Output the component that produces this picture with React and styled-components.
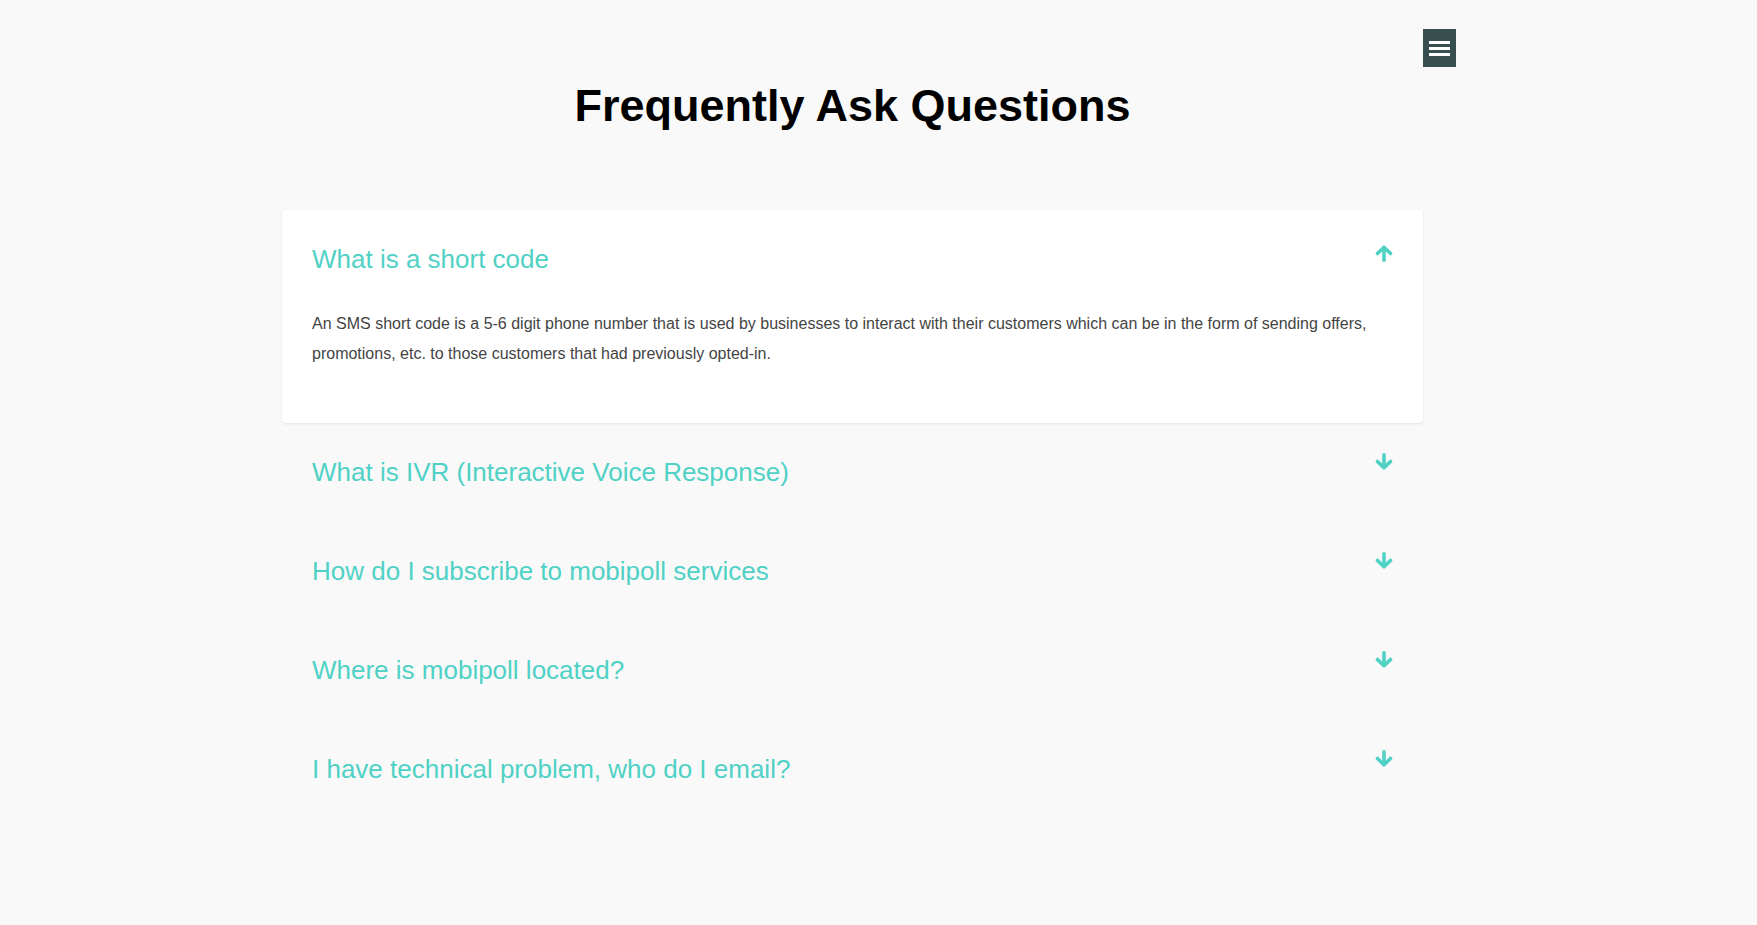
import React, { useState } from "react";
import styled, { createGlobalStyle } from "styled-components";

const GlobalStyle = createGlobalStyle`
  body {
    margin: 0;
    background: #f9f9f9;
    font-family: "Liberation Sans", Arial, sans-serif;
  }
`;

const Page = styled.div`
  width: 1141px;
  margin-left: 282px;
  padding-top: 80px;
  padding-bottom: 80px;
`;

const Title = styled.h1`
  margin: 0 0 78px;
  text-align: center;
  font-size: 45px;
  line-height: 52px;
  font-weight: bold;
  color: #000;
`;

// nav toggle stays on top of the page
const MenuButton = styled.button`
  position: fixed;
  top: 29px;
  right: 301px;
  width: 33px;
  height: 38px;
  padding: 0;
  border: none;
  background: #37504f;
  display: flex;
  flex-direction: column;
  justify-content: center;
  align-items: center;
  gap: 3px;
  cursor: pointer;
`;

const MenuBar = styled.span`
  display: block;
  width: 21px;
  height: 3px;
  background: #fff;
`;

const List = styled.div`
  display: flex;
  flex-direction: column;
`;

const Item = styled.div`
  padding: 30px;
  border-radius: 4px;
  background: ${(p) => (p.$open ? "#fff" : "transparent")};
  box-shadow: ${(p) => (p.$open ? "0 1px 3px rgba(0, 0, 0, 0.09)" : "none")};
`;

const Head = styled.div`
  display: flex;
  justify-content: space-between;
  align-items: flex-start;
  cursor: pointer;
`;

const Question = styled.h3`
  margin: 0;
  font-size: 26px;
  line-height: 39px;
  font-weight: normal;
  color: #4fd1c5;
`;

const ArrowIcon = styled.svg`
  flex: none;
  width: 18px;
  height: 17px;
  margin-top: ${(p) => (p.$up ? "5px" : "0")};
`;

const Answer = styled.p`
  margin: 30px 0 24px;
  font-size: 16px;
  line-height: 30px;
  color: #444;
`;

const faqs = [
  {
    q: "What is a short code",
    a: "An SMS short code is a 5-6 digit phone number that is used by businesses to interact with their customers which can be in the form of sending offers, promotions, etc. to those customers that had previously opted-in.",
  },
  {
    q: "What is IVR (Interactive Voice Response)",
    a: "IVR is an automated telephone system that lets callers interact with a menu of recorded prompts using their voice or keypad.",
  },
  {
    q: "How do I subscribe to mobipoll services",
    a: "Contact our sales team and we will set up an account for you.",
  },
  {
    q: "Where is mobipoll located?",
    a: "Our office details are listed on the contact page.",
  },
  {
    q: "I have technical problem, who do I email?",
    a: "Send an email to our support team and we will get back to you.",
  },
];

function Arrow({ up }) {
  return (
    <ArrowIcon $up={up} viewBox="0 0 18 17" fill="none" stroke="#4fd1c5" strokeWidth="3.6" strokeLinecap="round" strokeLinejoin="round">
      {up ? (
        <>
          <polyline points="2.5,8.5 9,2.2 15.5,8.5" />
          <line x1="9" y1="3" x2="9" y2="15.2" />
        </>
      ) : (
        <>
          <polyline points="2.5,8.5 9,14.8 15.5,8.5" />
          <line x1="9" y1="1.8" x2="9" y2="14" />
        </>
      )}
    </ArrowIcon>
  );
}

export default function App() {
  const [open, setOpen] = useState(0);

  return (
    <>
      <GlobalStyle />
      <MenuButton aria-label="menu">
        <MenuBar />
        <MenuBar />
        <MenuBar />
      </MenuButton>
      <Page>
        <Title>Frequently Ask Questions</Title>
        <List>
          {faqs.map((f, i) => (
            <Item key={f.q} $open={open === i}>
              <Head onClick={() => setOpen(open === i ? -1 : i)}>
                <Question>{f.q}</Question>
                <Arrow up={open === i} />
              </Head>
              {open === i && <Answer>{f.a}</Answer>}
            </Item>
          ))}
        </List>
      </Page>
    </>
  );
}
